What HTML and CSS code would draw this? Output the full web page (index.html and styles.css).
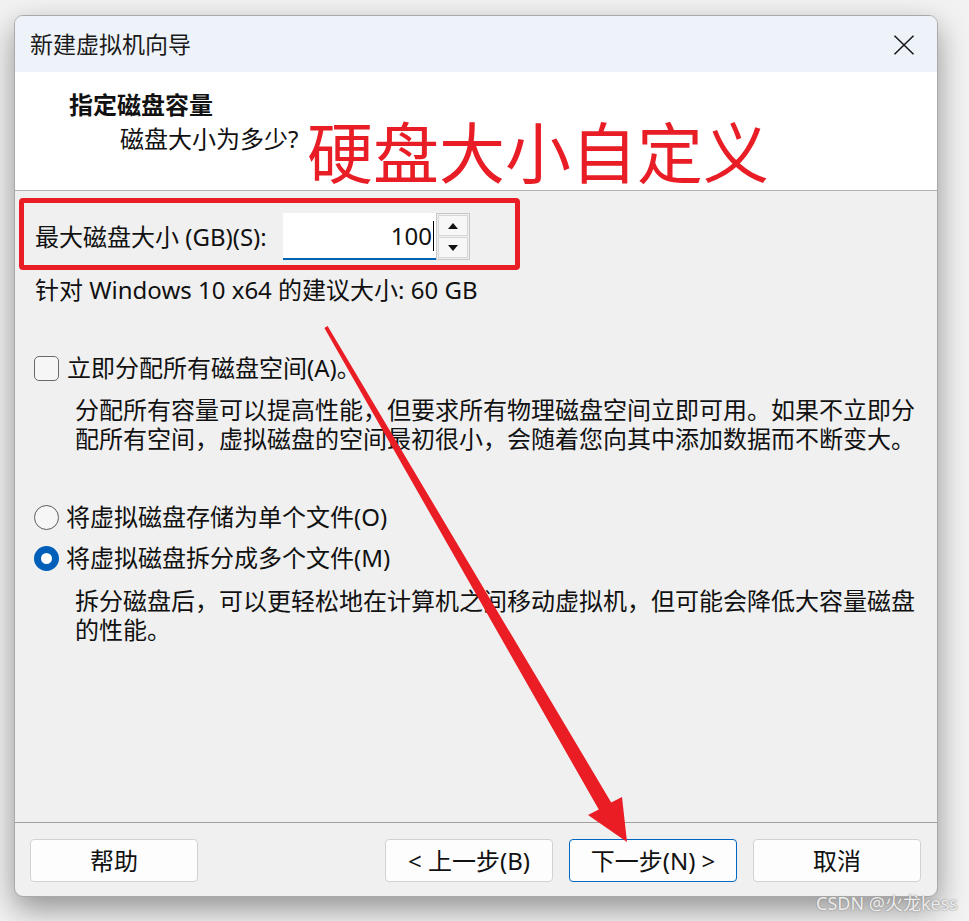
FILE: index.html
```html
<!DOCTYPE html>
<html lang="zh-CN">
<head>
<meta charset="utf-8">
<title>新建虚拟机向导</title>
<link rel="stylesheet" href="styles.css">
</head>
<body>
<div class="window">
  <div class="titlebar">
    <span class="title">新建虚拟机向导</span>
    <svg class="close" width="22" height="20" viewBox="0 0 22 20"><path d="M1.5 0.8 L20.5 19.2 M20.5 0.8 L1.5 19.2" stroke="#1a1a1a" stroke-width="1.6" fill="none"/></svg>
  </div>
  <div class="header">
    <div class="h-title">指定磁盘容量</div>
    <div class="h-sub">磁盘大小为多少?</div>
  </div>
  <div class="content">
    <div class="spin-row">
      <span class="field-label">最大磁盘大小 (GB)(S):</span>
      <div class="spin-input"><span class="val">100</span><span class="caret"></span></div>
      <div class="spinner">
        <div class="spin-btn"><span class="tri-up"></span></div>
        <div class="spin-btn"><span class="tri-down"></span></div>
      </div>
    </div>
    <div class="rec">针对 Windows 10 x64 的建议大小: 60 GB</div>
    <div class="check-row">
      <span class="checkbox"></span>
      <span class="opt-label">立即分配所有磁盘空间(A)。</span>
    </div>
    <p class="desc desc1">分配所有容量可以提高性能，但要求所有物理磁盘空间立即可用。如果不立即分配所有空间，虚拟磁盘的空间最初很小，会随着您向其中添加数据而不断变大。</p>
    <div class="radio-row r1">
      <span class="radio"></span>
      <span class="opt-label">将虚拟磁盘存储为单个文件(O)</span>
    </div>
    <div class="radio-row r2">
      <span class="radio checked"></span>
      <span class="opt-label">将虚拟磁盘拆分成多个文件(M)</span>
    </div>
    <p class="desc desc2">拆分磁盘后，可以更轻松地在计算机之间移动虚拟机，但可能会降低大容量磁盘的性能。</p>
  </div>
  <div class="footer">
    <button class="btn">帮助</button>
    <div class="btn-group">
      <button class="btn">&lt; 上一步(B)</button>
      <button class="btn primary">下一步(N) &gt;</button>
      <button class="btn">取消</button>
    </div>
  </div>
</div>

<div class="anno-text">硬盘大小自定义</div>
<div class="anno-box"></div>
<svg class="anno-arrow" width="969" height="921" viewBox="0 0 969 921">
  <polygon points="327.6,326 611.2,802.4 622,797 627,842 588,815 598.8,809.6 324.4,328" fill="#ea1c24"/>
</svg>
<div class="watermark">CSDN @火龙kess</div>
</body>
</html>
```
FILE: styles.css
```css
* { box-sizing: border-box; }
html, body { margin: 0; padding: 0; }
body {
  width: 969px;
  height: 921px;
  overflow: hidden;
  background: #f2f2f2;
  font-family: "Noto Sans", "Noto Sans CJK SC", sans-serif;
  color: #111;
  position: relative;
}
.window {
  position: relative;
  margin: 15px 0 0 14px;
  width: 924px;
  height: 882px;
  border: 1px solid #a9a9a9;
  border-radius: 9px;
  overflow: hidden;
  display: flex;
  flex-direction: column;
  background: #f0f0f0;
  box-shadow: 0 12px 30px rgba(0,0,0,0.4);
}
.titlebar {
  height: 56px;
  flex: none;
  background: #eef3f9;
  display: flex;
  align-items: center;
  justify-content: space-between;
  padding: 0 22px 0 15px;
}
.title { font-size: 23px; line-height: 32px; color: #1a1a1a; }
.close { display: block; margin-top: 1px; }
.header {
  height: 119px;
  flex: none;
  background: #fff;
  border-bottom: 1px solid #b4b4b4;
  padding: 17px 0 0 54px;
}
.h-title { font-size: 24px; line-height: 32px; font-weight: 700; }
.h-sub { font-size: 24px; line-height: 32px; margin: 2px 0 0 51px; }
.content {
  flex: 1;
  padding: 22px 18px 0 20px;
  font-size: 24px;
}
.spin-row { display: flex; align-items: center; height: 47px; }
.field-label { width: 248px; line-height: 32px; }
.spin-input {
  width: 153px;
  height: 47px;
  background: #fff;
  border-bottom: 2px solid #0063b1;
  display: flex;
  align-items: center;
  justify-content: flex-end;
  padding-right: 2px;
}
.val { line-height: 32px; }
.caret { width: 1px; height: 30px; background: #000; margin-left: 1px; }
.spinner {
  width: 34px;
  height: 47px;
  border: 1px solid #c8c8c8;
  display: flex;
  flex-direction: column;
  gap: 1px;
  padding: 1px;
  background: #f0f0f0;
}
.spin-btn {
  flex: 1;
  border: 1px solid #d6d6d6;
  background: #f7f7f7;
  display: flex;
  align-items: center;
  justify-content: center;
}
.tri-up, .tri-down { width: 0; height: 0; border-left: 5px solid transparent; border-right: 5px solid transparent; }
.tri-up { border-bottom: 6px solid #111; }
.tri-down { border-top: 6px solid #111; }
.rec { line-height: 32px; margin-top: 14px; }
.check-row, .radio-row { display: flex; align-items: center; height: 32px; }
.check-row { margin-top: 46px; }
.checkbox {
  width: 25px; height: 25px;
  border: 1.5px solid #6a6a6a;
  border-radius: 5px;
  background: #f6f6f6;
  margin: 0 8px 0 -1px;
  flex: none;
}
.opt-label { line-height: 32px; }
.desc {
  margin: 11px 0 0 40px;
  line-height: 29px;
  width: 846px;
}
.radio-row.r1 { margin-top: 48px; }
.radio-row.r2 { margin-top: 9px; }
.radio {
  width: 25px; height: 25px;
  border-radius: 50%;
  border: 1.5px solid #5c5c5c;
  background: #f6f6f6;
  margin: 0 7px 0 -1px;
  flex: none;
  position: relative;
}
.radio.checked {
  border: 7.5px solid #005fb8;
  background: #fff;
}
.desc2 { margin-top: 12px; }
.footer {
  height: 74px;
  flex: none;
  border-top: 1px solid #a0a0a0;
  display: flex;
  justify-content: space-between;
  padding: 16px 16px 0 15px;
}
.btn-group { display: flex; gap: 16px; }
.btn {
  width: 168px;
  height: 43px;
  background: #fdfdfd;
  border: 1px solid #d2d2d2;
  border-radius: 4px;
  font: inherit;
  font-size: 24px;
  color: #111;
  padding: 0;
  line-height: 32px;
}
.btn.primary { border-color: #0067c0; }
.anno-text {
  position: absolute;
  left: 307px;
  top: 116px;
  font-size: 66px;
  line-height: 1;
  color: #e81d25;
  font-family: "Noto Sans CJK SC", sans-serif;
  white-space: nowrap;
}
.anno-box {
  position: absolute;
  left: 19px;
  top: 198px;
  width: 501px;
  height: 72px;
  border: 5px solid #e81d25;
  border-radius: 4px;
}
.anno-arrow { position: absolute; left: 0; top: 0; }
.watermark {
  position: absolute;
  left: 816px;
  top: 891px;
  font-size: 18px;
  line-height: 24px;
  color: rgba(255,255,255,0.85);
  text-shadow: 0 0 1px #8a8a8a, 0 0 2px #9a9a9a;
  white-space: nowrap;
}
```
